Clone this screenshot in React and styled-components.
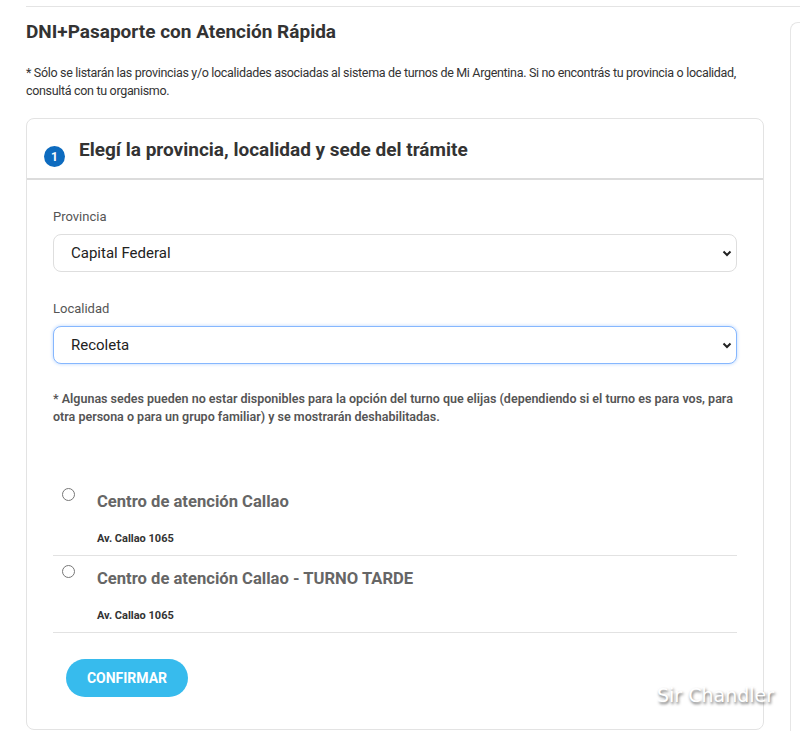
import React from 'react';
import styled, { createGlobalStyle } from 'styled-components';

const GlobalStyle = createGlobalStyle`
  html, body {
    margin: 0;
    padding: 0;
    background: #fff;
    font-family: Roboto, "Noto Sans", sans-serif;
    color: #333;
  }
`;

const Page = styled.div`
  position: relative;
  width: 800px;
  height: 731px;
  overflow: hidden;
  padding-top: 6px;
  box-sizing: border-box;
`;

const TopRule = styled.div`
  margin-left: 26px;
  border-top: 1px solid #e4e4e4;
`;

const Row = styled.div`
  display: flex;
  padding-left: 26px;
`;

const Main = styled.div`
  width: 738px;
  flex-shrink: 0;
`;

const Aside = styled.div`
  flex: 1;
  margin-left: 26px;
  margin-top: 15px;
  height: 800px;
  border: 1px solid #e6e6e6;
  border-right: none;
  border-radius: 8px 0 0 0;
`;

const Title = styled.h1`
  margin: 13px 0 0;
  font-size: 19px;
  line-height: 24px;
  font-weight: 700;
  color: #333;
`;

const Intro = styled.p`
  margin: 20px 0 0;
  font-size: 12.5px;
  line-height: 18px;
  letter-spacing: -0.32px;
  color: #333;
`;

const Card = styled.section`
  margin-top: 18px;
  border: 1px solid #e3e3e3;
  border-radius: 8px;
  height: 612px;
  box-sizing: border-box;
`;

const CardHeader = styled.header`
  display: flex;
  align-items: flex-end;
  gap: 14px;
  height: 61px;
  padding: 0 0 16px 17px;
  box-sizing: border-box;
  border-bottom: 2px solid #dcdcdc;
`;

const Badge = styled.span`
  width: 21px;
  height: 21px;
  border-radius: 50%;
  background: #0d6bbf;
  color: #fff;
  font-size: 12px;
  font-weight: 700;
  display: flex;
  align-items: center;
  justify-content: center;
  margin-bottom: -5px;
`;

const CardTitle = styled.h2`
  margin: 0;
  font-size: 19px;
  line-height: 24px;
  font-weight: 700;
  color: #333;
`;

const CardBody = styled.div`
  padding: 28px 26px 0;
`;

const Field = styled.div`
  & + & {
    margin-top: 28px;
  }
`;

const Label = styled.label`
  display: block;
  font-size: 13px;
  line-height: 18px;
  color: #555;
  margin-bottom: 8px;
`;

const SelectWrap = styled.div`
  position: relative;
`;

const Select = styled.select`
  appearance: none;
  width: 100%;
  height: 38px;
  box-sizing: border-box;
  padding: 0 30px 0 17px;
  border: 1px solid ${p => (p.$focused ? '#86b7fe' : '#dedede')};
  box-shadow: ${p => (p.$focused ? '0 0 3px 1px rgba(13,110,253,0.18)' : 'none')};
  border-radius: 8px;
  background: #fff;
  font-family: inherit;
  font-size: 15px;
  color: #222;
  outline: none;
`;

const Chevron = styled.svg`
  position: absolute;
  right: 5px;
  top: 50%;
  transform: translateY(-50%);
  pointer-events: none;
`;

const Note = styled.p`
  margin: 26px 0 0;
  font-size: 12.5px;
  line-height: 18px;
  font-weight: 600;
  color: #555;
`;

const Options = styled.div`
  margin-top: 53px;
`;

const Option = styled.label`
  display: flex;
  gap: 22px;
  padding: 11px 0 8px 9px;
  border-bottom: 1px solid #e2e2e2;
`;

const Radio = styled.input`
  appearance: none;
  width: 13px;
  height: 13px;
  margin: -2px 0 0;
  border: 1px solid #777;
  border-radius: 50%;
  background: #fff;
  flex-shrink: 0;
`;

const OptionText = styled.div`
  display: flex;
  flex-direction: column;
  gap: 17px;
`;

const OptionName = styled.span`
  font-size: 16.6px;
  line-height: 24px;
  font-weight: 700;
  color: #666;
`;

const OptionAddress = styled.span`
  font-size: 11px;
  line-height: 16px;
  font-weight: 700;
  color: #333;
`;

const ConfirmButton = styled.button`
  margin: 26px 0 0 13px;
  width: 122px;
  height: 38px;
  border: none;
  border-radius: 19px;
  background: #37bbed;
  color: #fff;
  font-family: inherit;
  font-size: 14px;
  font-weight: 700;
`;

const Watermark = styled.div`
  position: absolute;
  left: 657px;
  top: 684px;
  font-family: "DejaVu Sans", sans-serif;
  font-size: 19px;
  color: #fff;
  text-shadow: 1px 2px 3px rgba(0, 0, 0, 0.6);
`;

const ChevronIcon = () => (
  <Chevron width="10" height="8" viewBox="0 0 10 8">
    <path d="M1.5 2.5 L5 6 L8.5 2.5" fill="none" stroke="#222" strokeWidth="2" />
  </Chevron>
);

const sedes = [
  { name: 'Centro de atención Callao', address: 'Av. Callao 1065' },
  { name: 'Centro de atención Callao - TURNO TARDE', address: 'Av. Callao 1065' },
];

export default function App() {
  return (
    <>
      <GlobalStyle />
      <Page>
        <TopRule />
        <Row>
          <Main>
            <Title>DNI+Pasaporte con Atención Rápida</Title>
            <Intro>
              * Sólo se listarán las provincias y/o localidades asociadas al sistema de turnos de Mi Argentina. Si no encontrás tu provincia o localidad, consultá con tu organismo.
            </Intro>
            <Card>
              <CardHeader>
                <Badge>1</Badge>
                <CardTitle>Elegí la provincia, localidad y sede del trámite</CardTitle>
              </CardHeader>
              <CardBody>
                <Field>
                  <Label>Provincia</Label>
                  <SelectWrap>
                    <Select defaultValue="caba">
                      <option value="caba">Capital Federal</option>
                    </Select>
                    <ChevronIcon />
                  </SelectWrap>
                </Field>
                <Field>
                  <Label>Localidad</Label>
                  <SelectWrap>
                    <Select $focused defaultValue="recoleta">
                      <option value="recoleta">Recoleta</option>
                    </Select>
                    <ChevronIcon />
                  </SelectWrap>
                </Field>
                <Note>
                  * Algunas sedes pueden no estar disponibles para la opción del turno que elijas (dependiendo si el turno es para vos, para otra persona o para un grupo familiar) y se mostrarán deshabilitadas.
                </Note>
                <Options>
                  {sedes.map(s => (
                    <Option key={s.name}>
                      <Radio type="radio" name="sede" />
                      <OptionText>
                        <OptionName>{s.name}</OptionName>
                        <OptionAddress>{s.address}</OptionAddress>
                      </OptionText>
                    </Option>
                  ))}
                </Options>
                <ConfirmButton>CONFIRMAR</ConfirmButton>
              </CardBody>
            </Card>
          </Main>
          <Aside />
        </Row>
        <Watermark>Sir Chandler</Watermark>
      </Page>
    </>
  );
}
